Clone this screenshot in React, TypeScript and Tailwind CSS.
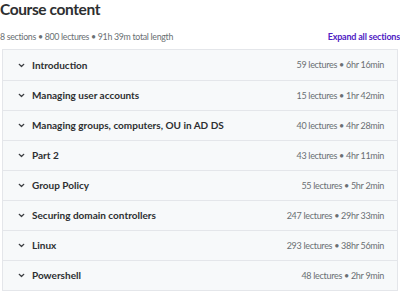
import React from "react";

const rows: [string, string][] = [
  ["Introduction", "59 lectures • 6hr 16min"],
  ["Managing user accounts", "15 lectures • 1hr 42min"],
  ["Managing groups, computers, OU in AD DS", "40 lectures • 4hr 28min"],
  ["Part 2", "43 lectures • 4hr 11min"],
  ["Group Policy", "55 lectures • 5hr 2min"],
  ["Securing domain controllers", "247 lectures • 29hr 33min"],
  ["Linux", "293 lectures • 38hr 56min"],
  ["Powershell", "48 lectures • 2hr 9min"],
];

function Chevron() {
  return (
    <svg width="7" height="5" viewBox="0 0 7 5" className="shrink-0">
      <path d="M1.2 1.3 L3.5 3.5 L5.8 1.3" fill="none" stroke="#3c3f42" strokeWidth="1.2" strokeLinecap="round" strokeLinejoin="round" />
    </svg>
  );
}

export default function App() {
  return (
    <div className="w-[400px] h-[291px] overflow-hidden bg-white text-[#2d2f31]" style={{ fontFamily: "Lato, 'Noto Sans', sans-serif" }}>
      <div className="text-[15.5px] font-bold leading-[20px] h-[19px] tracking-[-0.4px] -mt-[1px]">Course content</div>
      <div className="flex items-center justify-between mt-[12px] h-[14px]">
        <div className="text-[8.8px] tracking-[-0.3px] text-[#6a6f73]">8 sections • 800 lectures • 91h 39m total length</div>
        <div className="text-[9px] tracking-[-0.2px] font-bold text-[#5022c3]">Expand all sections</div>
      </div>
      <div className="mt-[5px] mx-[2px] border border-[#e4e6ea] bg-[#f7f9fa]">
        {rows.map(([t, m], i) => (
          <div key={i} className={`flex items-center h-[30px] pl-[15px] pr-[13px] ${i > 0 ? "border-t border-[#e4e6ea]" : ""}`}>
            <Chevron />
            <div className="ml-[7px] text-[10px] font-bold flex-1">{t}</div>
            <div className="text-[9px] tracking-[-0.3px] text-[#6a6f73]">{m}</div>
          </div>
        ))}
      </div>
    </div>
  );
}
